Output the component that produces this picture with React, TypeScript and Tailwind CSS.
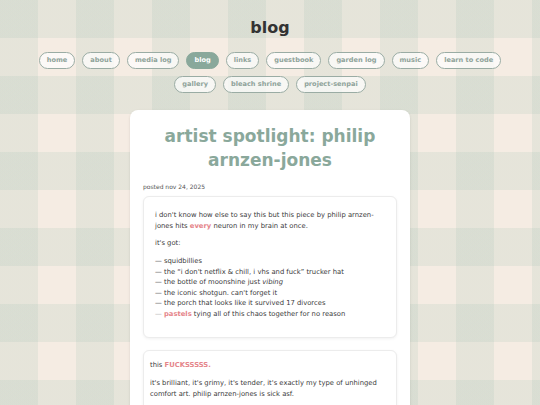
import React from "react";

const links = [
  "home",
  "about",
  "media log",
  "blog",
  "links",
  "guestbook",
  "garden log",
  "music",
  "learn to code",
  "gallery",
  "bleach shrine",
  "project-senpai",
];

const Pink = ({ children }: { children: React.ReactNode }) => (
  <span className="font-bold text-[#e5858a]">{children}</span>
);

const items: React.ReactNode[] = [
  "squidbillies",
  <>the “i don't netflix &amp; chill, i vhs and fuck” trucker hat</>,
  <>
    the bottle of moonshine just <em>vibing</em>
  </>,
  "the iconic shotgun. can't forget it",
  "the porch that looks like it survived 17 divorces",
];

export default function App() {
  return (
    <div className="min-h-screen overflow-hidden bg-[#f5ece3] bg-[linear-gradient(90deg,rgba(145,183,167,0.15)_50%,transparent_50%),linear-gradient(180deg,rgba(145,183,167,0.15)_50%,transparent_50%)] bg-[length:76px_76px] font-['DejaVu_Sans',sans-serif]">
      <h1 className="pt-[18px] text-center text-[16px] font-bold leading-[20px] text-[#333]">
        blog
      </h1>

      <nav className="mx-auto mt-[14px] flex max-w-[480px] flex-wrap justify-center gap-x-[7px] gap-y-[7px]">
        {links.map((l) => (
          <span
            key={l}
            className={
              l === "blog"
                ? "rounded-full border-[1.5px] border-[#89a89b] bg-[#89a89b] px-[7px] py-[3px] text-[6.6px] font-bold leading-[9px] text-white"
                : "rounded-full border-[1.5px] border-[#9aaca4] bg-white/70 px-[7px] py-[3px] text-[6.6px] font-bold leading-[9px] text-[#8fa39a]"
            }
          >
            {l}
          </span>
        ))}
      </nav>

      <main className="mx-auto mt-[17px] w-[280px] rounded-lg bg-white px-[13px] pt-[14px] pb-6 shadow-sm">
        <h2 className="text-center text-[17px] font-bold leading-[24px] text-[#8aa89b]">
          artist spotlight: philip arnzen-jones
        </h2>
        <p className="mt-[10px] text-[6px] leading-[9px] text-[#555]">
          posted nov 24, 2025
        </p>

        <section className="mt-[4.5px] rounded-md border border-[#ececec] bg-white px-[11px] pt-[13.5px] pb-[18px] text-[6.8px] text-[#3a3a3a] shadow-[0_1px_3px_rgba(0,0,0,0.06)]">
          <p className="leading-[11px]">
            i don't know how else to say this but this piece by philip arnzen-jones hits{" "}
            <Pink>every</Pink> neuron in my brain at once.
          </p>
          <p className="mt-[6px] leading-[11px]">it's got:</p>
          <ul className="mt-[7px] leading-[10.5px]">
            {items.map((it, i) => (
              <li key={i}>— {it}</li>
            ))}
            <li>
              <span className="text-[#aaa]">—</span> <Pink>pastels</Pink> tying all of this chaos
              together for no reason
            </li>
          </ul>
        </section>

        <section className="mt-3 rounded-md border border-[#ececec] bg-white px-[6px] pt-[8.5px] pb-3 text-[6.8px] text-[#3a3a3a] shadow-[0_1px_3px_rgba(0,0,0,0.06)]">
          <p className="leading-[11px]">
            this <Pink>FUCKSSSSS.</Pink>
          </p>
          <p className="mt-[7px] leading-[11px]">
            it's brilliant, it's grimy, it's tender, it's exactly my type of unhinged comfort art.
            philip arnzen-jones is sick asf.
          </p>
          <p className="mt-[7px] leading-[11px] text-[#aaa]">— 10/10, would stare at again.</p>
        </section>
      </main>
    </div>
  );
}
